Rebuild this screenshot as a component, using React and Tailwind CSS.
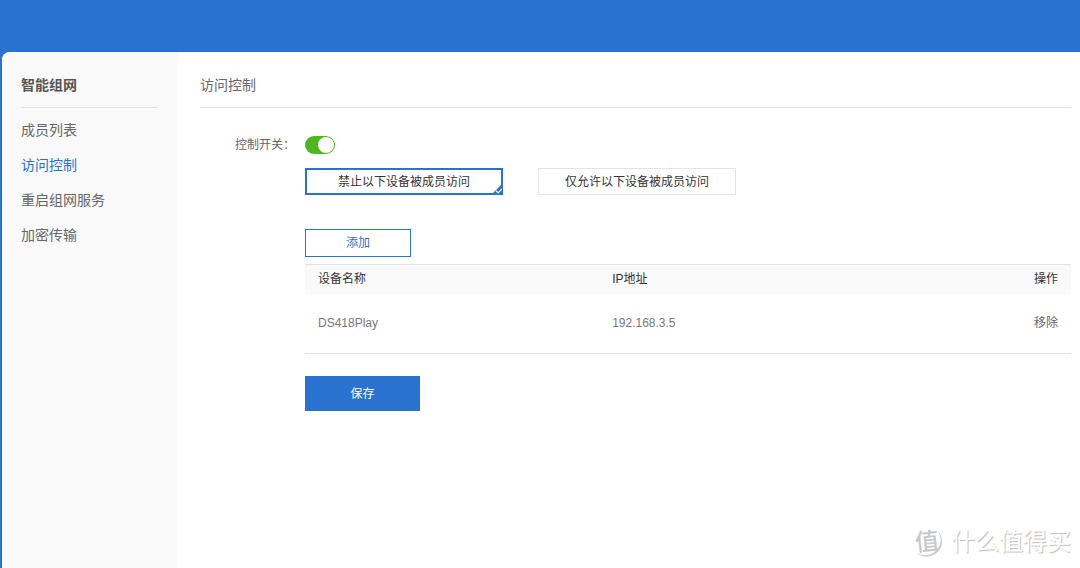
import React, { useState } from "react";

const menu = ["成员列表", "访问控制", "重启组网服务", "加密传输"];

const modes = [
    { id: "deny", label: "禁止以下设备被成员访问" },
    { id: "allow", label: "仅允许以下设备被成员访问" },
];

function Sidebar({ active, onSelect }) {
    return (
        <aside className="w-44 shrink-0 bg-[#f9f9f9] pt-3 pl-[19px] pr-5">
            <h2 className="h-11 leading-[43px] border-b border-[#e2e2e2] text-sm font-bold text-[#555]">
                智能组网
            </h2>
            <nav className="mt-[5px] flex flex-col">
                {menu.map((item) => (
                    <a
                        key={item}
                        href="#"
                        onClick={(e) => {
                            e.preventDefault();
                            onSelect(item);
                        }}
                        className={
                            item === active
                                ? "text-sm leading-[35px] text-[#2a72d0]"
                                : "text-sm leading-[35px] text-[#666]"
                        }
                    >
                        {item}
                    </a>
                ))}
            </nav>
        </aside>
    );
}

function ModeOption({ mode, checked, onChange }) {
    return (
        <label
            className={
                checked
                    ? "relative flex h-[27px] w-[198px] cursor-pointer items-center justify-center border-2 border-[#2a72d0] text-[#333]"
                    : "relative flex h-[27px] w-[198px] cursor-pointer items-center justify-center border border-[#e4e4e4] text-[#333]"
            }
        >
            <input
                type="radio"
                name="mode"
                value={mode.id}
                checked={checked}
                onChange={onChange}
                className="sr-only"
            />
            {mode.label}
            {checked && (
                <svg
                    className="absolute -right-0.5 -bottom-0.5 h-3 w-3"
                    viewBox="0 0 12 12"
                    aria-hidden="true"
                >
                    <path d="M12 0V12H0Z" fill="#2a72d0" />
                    <path
                        d="M5 7.8L7.2 9.8L10.8 6"
                        fill="none"
                        stroke="#fff"
                        strokeWidth="1.2"
                    />
                </svg>
            )}
        </label>
    );
}

function DeviceTable({ devices, onRemove }) {
    return (
        <table className="mt-[7px] w-full table-fixed border-y border-[#e2e2e2] text-left">
            <thead>
                <tr className="h-[29px] bg-[#f9f9f9] text-[#333]">
                    <th className="w-[38.4%] px-[13px] font-normal">
                        设备名称
                    </th>
                    <th className="px-[13px] font-normal">IP地址</th>
                    <th className="w-24 px-[13px] text-right font-normal">
                        操作
                    </th>
                </tr>
            </thead>
            <tbody>
                {devices.map((device) => (
                    <tr key={device.ip} className="h-[60px] text-[#777]">
                        <td className="px-[13px]">{device.name}</td>
                        <td className="px-[13px]">{device.ip}</td>
                        <td className="px-[13px] text-right">
                            <button
                                type="button"
                                className="cursor-pointer text-[#666]"
                                onClick={() => onRemove(device.ip)}
                            >
                                移除
                            </button>
                        </td>
                    </tr>
                ))}
            </tbody>
        </table>
    );
}

function Watermark() {
    return (
        <div className="pointer-events-none absolute right-[9px] bottom-2.5 flex items-center gap-2">
            <div className="relative flex h-8 w-8 items-center justify-center">
                <svg
                    className="absolute inset-0 h-8 w-8"
                    viewBox="0 0 32 32"
                    aria-hidden="true"
                >
                    <path
                        d="M26 4C32 9 33 19 27 25.5C21 32 11 32 5 26.5C12 30.5 20 29.8 25.5 24.5C31 18.5 31 10 26 4Z"
                        fill="#c8c8c8"
                    />
                </svg>
                <span className="relative -rotate-6 text-2xl leading-7 font-medium text-[#c8c8c8]">
                    值
                </span>
            </div>
            <span className="text-2xl leading-8 text-white [text-shadow:1px_1px_1px_#bbb]">
                什么值得买
            </span>
        </div>
    );
}

function App() {
    const [active, setActive] = useState("访问控制");
    const [enabled, setEnabled] = useState(true);
    const [mode, setMode] = useState("deny");
    const [devices, setDevices] = useState([
        { name: "DS418Play", ip: "192.168.3.5" },
    ]);

    return (
        <div className="relative flex min-h-screen flex-col bg-[#2a72d0] pt-13 pl-0.5 font-['Liberation_Sans','Noto_Sans_CJK_SC',sans-serif] text-xs">
            <div className="flex flex-1 overflow-hidden rounded-tl-lg bg-white">
                <Sidebar active={active} onSelect={setActive} />
                <main className="min-w-0 flex-1 pt-3 pr-[9px] pl-[22px]">
                    <h1 className="h-11 leading-[43px] border-b border-[#e2e2e2] text-sm text-[#666]">
                        {active}
                    </h1>
                    <form
                        className="mt-7 flex"
                        onSubmit={(e) => e.preventDefault()}
                    >
                        <label
                            htmlFor="switch"
                            className="w-[105px] shrink-0 pl-[35px] leading-[18px] text-[#666]"
                        >
                            控制开关：
                        </label>
                        <div className="min-w-0 flex-1">
                            <input
                                id="switch"
                                type="checkbox"
                                checked={enabled}
                                onChange={(e) => setEnabled(e.target.checked)}
                                className="flex h-[18px] w-[30px] cursor-pointer appearance-none items-center rounded-full bg-[#ccc] px-px before:h-4 before:w-4 before:rounded-full before:bg-white before:content-[''] checked:justify-end checked:bg-[#4cb71f]"
                            />
                            <div className="mt-3.5 flex flex-wrap gap-[35px]">
                                {modes.map((item) => (
                                    <ModeOption
                                        key={item.id}
                                        mode={item}
                                        checked={mode === item.id}
                                        onChange={() => setMode(item.id)}
                                    />
                                ))}
                            </div>
                            <button
                                type="button"
                                className="mt-[34px] block h-7 w-[106px] cursor-pointer border border-[#2a72d0] text-[#2a72d0]"
                            >
                                添加
                            </button>
                            <DeviceTable
                                devices={devices}
                                onRemove={(ip) =>
                                    setDevices(
                                        devices.filter((d) => d.ip !== ip)
                                    )
                                }
                            />
                            <button
                                type="submit"
                                className="mt-[22px] block h-[35px] w-[115px] cursor-pointer bg-[#2a72d0] text-white"
                            >
                                保存
                            </button>
                        </div>
                    </form>
                </main>
            </div>
            <Watermark />
        </div>
    );
}

export default App;
